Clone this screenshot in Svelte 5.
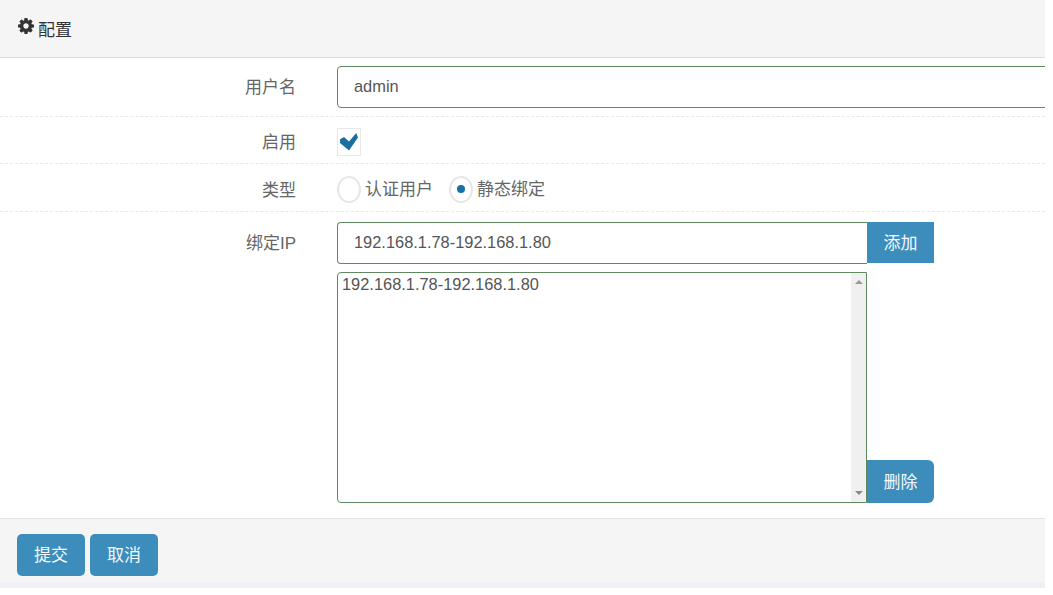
<script lang="ts">
	let username = $state('admin');
	let enabled = $state(true);
	let kind = $state('static');
	let bindIp = $state('192.168.1.78-192.168.1.80');
	let bindList = $state(['192.168.1.78-192.168.1.80']);

	const gear =
		'M1152 896q0-106-75-181t-181-75-181 75-75 181 75 181 181 75 181-75 75-181zm512-109v222q0 12-8 23t-20 13l-185 28q-19 54-39 91 35 50 107 138 10 12 10 25t-9 23q-27 37-99 108t-94 71q-12 0-26-9l-138-108q-44 23-91 38-16 136-29 186-7 28-36 28h-222q-14 0-24.500-8.500t-11.500-21.500l-28-184q-49-16-90-37l-141 107q-10 9-25 9-14 0-25-11-126-114-165-168-7-10-7-23 0-12 8-23 15-21 51-66.500t54-70.500q-27-50-41-99l-183-27q-13-2-21-12.500t-8-23.500v-222q0-12 8-23t19-13l186-28q14-46 39-92-40-57-107-138-10-12-10-24 0-10 9-23 26-36 98.500-107.500t94.500-71.500q13 0 26 10l138 107q44-23 91-38 16-136 29-186 7-28 36-28h222q14 0 24.500 8.500t11.500 21.500l28 184q49 16 90 37l142-107q9-9 24-9 13 0 25 10 129 119 165 170 7 8 7 22 0 12-8 23-15 21-51 66.500t-54 70.500q26 50 41 98l183 28q13 2 21 12.500t8 23.500z';
</script>

<div class="panel">
	<div class="panel-head">
		<svg class="gear" viewBox="128 128 1536 1536" aria-hidden="true"><path d={gear} fill-rule="evenodd" /></svg>
		<span class="title">配置</span>
	</div>

	<form class="form" onsubmit={(e) => e.preventDefault()}>
		<div class="row row-user">
			<span class="label">用户名</span>
			<div class="control overflow">
				<input class="input" bind:value={username} />
			</div>
		</div>

		<div class="row row-enable">
			<span class="label">启用</span>
			<div class="control">
				<button type="button" class="check" aria-label="启用" onclick={() => (enabled = !enabled)}>
					{#if enabled}
						<svg viewBox="0 0 20 20" aria-hidden="true"><path d="M0 7 L4.500 4.500 L10 9.500 L18 0 L20 5 L10 19.500 L0 11 Z" /></svg>
					{/if}
				</button>
			</div>
		</div>

		<div class="row row-type">
			<span class="label">类型</span>
			<div class="control radios">
				<button type="button" class="radio-item" onclick={() => (kind = 'auth')}>
					<span class="radio" class:on={kind === 'auth'}></span><span class="radio-text">认证用户</span>
				</button>
				<button type="button" class="radio-item" onclick={() => (kind = 'static')}>
					<span class="radio" class:on={kind === 'static'}></span><span class="radio-text">静态绑定</span>
				</button>
			</div>
		</div>

		<div class="row row-bind">
			<span class="label">绑定IP</span>
			<div class="control bind">
				<div class="bind-line">
					<input class="input bind-input" bind:value={bindIp} />
					<button type="button" class="btn add">添加</button>
				</div>
				<div class="bind-line list-line">
					<div class="list">
						<div class="list-items">
							{#each bindList as item}
								<div>{item}</div>
							{/each}
						</div>
						<div class="scrollbar">
							<span class="arrow up"></span>
							<span class="arrow down"></span>
						</div>
					</div>
					<button type="button" class="btn del">删除</button>
				</div>
			</div>
		</div>

		<div class="panel-foot">
			<button type="submit" class="btn foot">提交</button>
			<button type="button" class="btn foot">取消</button>
		</div>
	</form>
	<div class="strip"></div>
</div>

<style>
	:global(body) {
		background: #fff;
	}

	.panel {
		width: 1045px;
		overflow: hidden;
		font-family: 'Liberation Sans', 'Noto Sans CJK SC', sans-serif;
		font-size: 16.4px;
		color: #555;
	}

	.panel-head {
		height: 57px;
		padding: 0 18px;
		display: flex;
		align-items: center;
		gap: 4px;
		background: #f5f5f5;
		border-bottom: 1px solid #dcdcdc;
		color: #333;
	}

	.title {
		font-size: 17px;
		margin-top: -1px;
	}

	.gear {
		width: 16px;
		height: 16px;
		fill: #333;
		margin-top: -5px;
	}

	.row {
		display: flex;
		box-sizing: border-box;
		border-bottom: 1px dashed #e8e8e8;
	}

	.row-user {
		height: 59px;
		padding-top: 8px;
	}

	.row-enable {
		height: 47px;
		padding-top: 11px;
	}

	.row-type {
		height: 48px;
		padding-top: 11px;
	}

	.row-bind {
		height: 306px;
		padding-top: 10px;
		border-bottom: none;
	}

	.label {
		width: 296px;
		flex: none;
		text-align: right;
		font-size: 17px;
		color: #666;
		line-height: 44px;
	}

	.row-enable .label {
		line-height: 30px;
	}

	.row-type .label {
		line-height: 32px;
	}

	.control {
		margin-left: 41px;
		flex: 1;
		min-width: 0;
	}

	.overflow {
		margin-right: -20px;
	}

	.input {
		display: block;
		width: 100%;
		height: 42px;
		box-sizing: border-box;
		padding: 0 16px 2px;
		border: 1px solid #5f8a5f;
		border-radius: 4px;
		background: #fff;
		font: inherit;
		color: #555;
		outline: none;
	}

	.check {
		display: block;
		width: 24px;
		height: 28px;
		padding: 0 0 0 2px;
		background: #fff;
		border: 1px solid #e8e8e8;
		border-radius: 0;
		box-sizing: border-box;
	}

	.check svg {
		display: block;
		width: 18px;
		height: 20px;
		fill: #1a6f9e;
	}

	.radios {
		display: flex;
		gap: 17px;
	}

	.radio-item {
		display: flex;
		align-items: center;
		gap: 4px;
		padding: 0;
		height: 28px;
		border: none;
		background: none;
		font: inherit;
		font-size: 17px;
		color: #666;
	}

	.radio-text {
		margin-bottom: 4px;
		width: 67px;
		white-space: nowrap;
	}

	.radio {
		width: 24px;
		height: 27px;
		box-sizing: border-box;
		border: 2px solid #e6e6e6;
		border-radius: 50%;
		background: #fff;
		display: flex;
		align-items: center;
		justify-content: center;
	}

	.radio.on::after {
		content: '';
		width: 8px;
		height: 8px;
		border-radius: 50%;
		background: #1a6fa8;
	}

	.bind {
		width: 597px;
		flex: none;
	}

	.bind-line {
		display: flex;
		align-items: flex-start;
	}

	.bind-input {
		width: 530px;
		flex: none;
		border-radius: 4px 0 0 4px;
		border-right: none;
	}

	.btn {
		border: none;
		background: #3c8dbc;
		color: #f4f9fc;
		font: inherit;
		font-size: 17px;
		width: 67px;
		height: 42px;
		padding: 0 0 3px;
		flex: none;
	}

	.add {
		height: 41px;
	}

	.list-line {
		margin-top: 8px;
		align-items: flex-end;
	}

	.list {
		width: 530px;
		height: 231px;
		flex: none;
		box-sizing: border-box;
		border: 1px solid #5f8a5f;
		border-radius: 4px 0 0 4px;
		display: flex;
		background: #fff;
	}

	.list-items {
		flex: 1;
		padding: 1px 4px;
		line-height: 20px;
	}

	.scrollbar {
		width: 15px;
		background: #f0f0f0;
		display: flex;
		flex-direction: column;
		justify-content: space-between;
		align-items: center;
		padding: 7px 0;
	}

	.arrow {
		width: 0;
		height: 0;
		border-left: 4px solid transparent;
		border-right: 4px solid transparent;
	}

	.arrow.up {
		border-bottom: 4px solid #9a9a9a;
	}

	.arrow.down {
		border-top: 4px solid #8a8a8a;
	}

	.del {
		height: 43px;
		border-radius: 0 6px 6px 0;
	}

	.panel-foot {
		height: 64px;
		box-sizing: border-box;
		padding: 15px 17px 0;
		display: flex;
		gap: 5px;
		background: #f5f5f5;
		border-top: 1px solid #e4e4e4;
	}

	.foot {
		width: 68px;
		border-radius: 5px;
	}

	.strip {
		height: 6px;
		background: #eef0f4;
	}
</style>
